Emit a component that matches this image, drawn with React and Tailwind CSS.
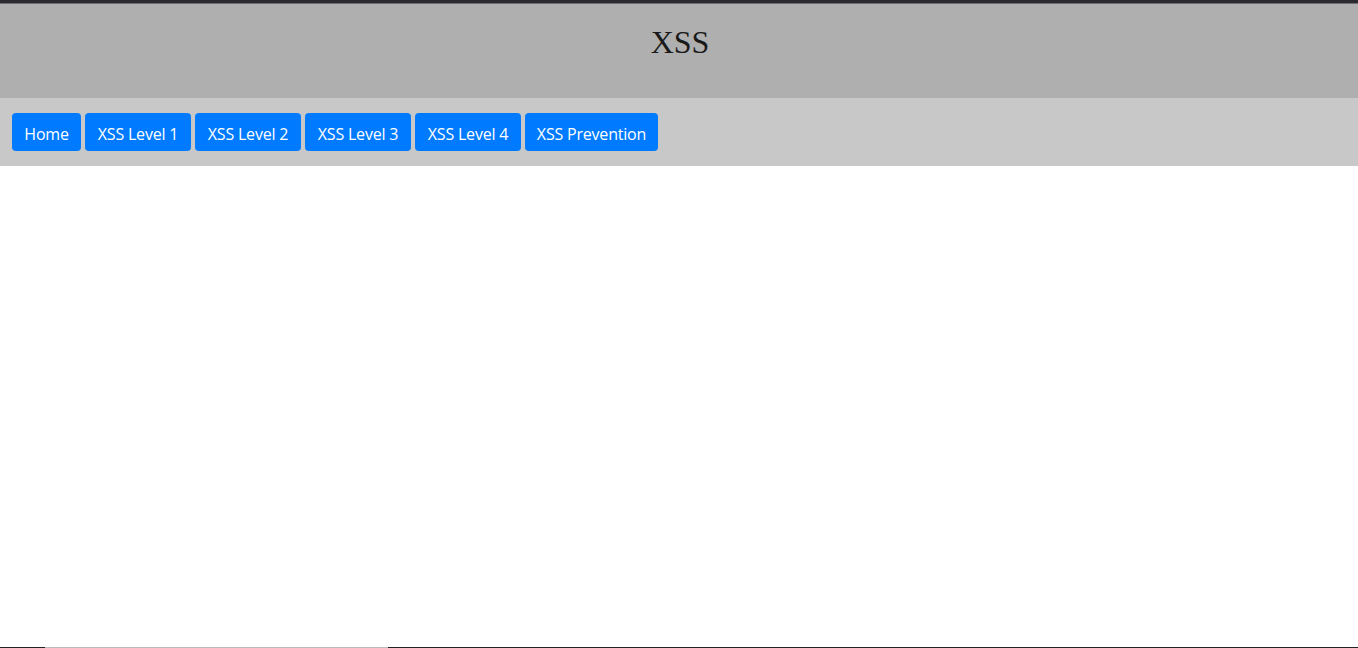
export default function App() {
  const btns = [
    ["Home", "w-[69px]"],
    ["XSS Level 1", "w-[106px]"],
    ["XSS Level 2", "w-[106px]"],
    ["XSS Level 3", "w-[106px]"],
    ["XSS Level 4", "w-[106px]"],
    ["XSS Prevention", "w-[133px]"],
  ];
  return (
    <div className="w-[1358px] h-[648px] flex flex-col bg-white overflow-hidden">
      <div className="h-[3px] bg-[#2a2a31]" />
      <div className="h-px bg-[#6e6e72]" />
      <header className="h-[94px] bg-[#afafaf] flex justify-center">
        <h1 className="mt-[20px] ml-[2px] text-[32px] leading-[36px] text-[#1a1a1a] font-['Liberation_Serif',serif]">XSS</h1>
      </header>
      <nav className="h-[68px] bg-[#c8c8c8] flex items-start gap-[4px] pl-[12px] pt-[15px]">
        {btns.map(([t, w]) => (
          <button
            key={t}
            className={`${w} h-[38px] pt-[3px] rounded-[4px] bg-[#007bff] text-white text-[16px] flex items-center justify-center font-['Open_Sans',sans-serif] tracking-[-0.2px]`}
          >
            {t}
          </button>
        ))}
      </nav>
      <main className="flex-1 bg-white" />
      <div className="h-px flex">
        <div className="w-[45px] bg-[#222]" />
        <div className="w-[343px] bg-[#bbb]" />
        <div className="flex-1 bg-[#222]" />
      </div>
    </div>
  );
}
